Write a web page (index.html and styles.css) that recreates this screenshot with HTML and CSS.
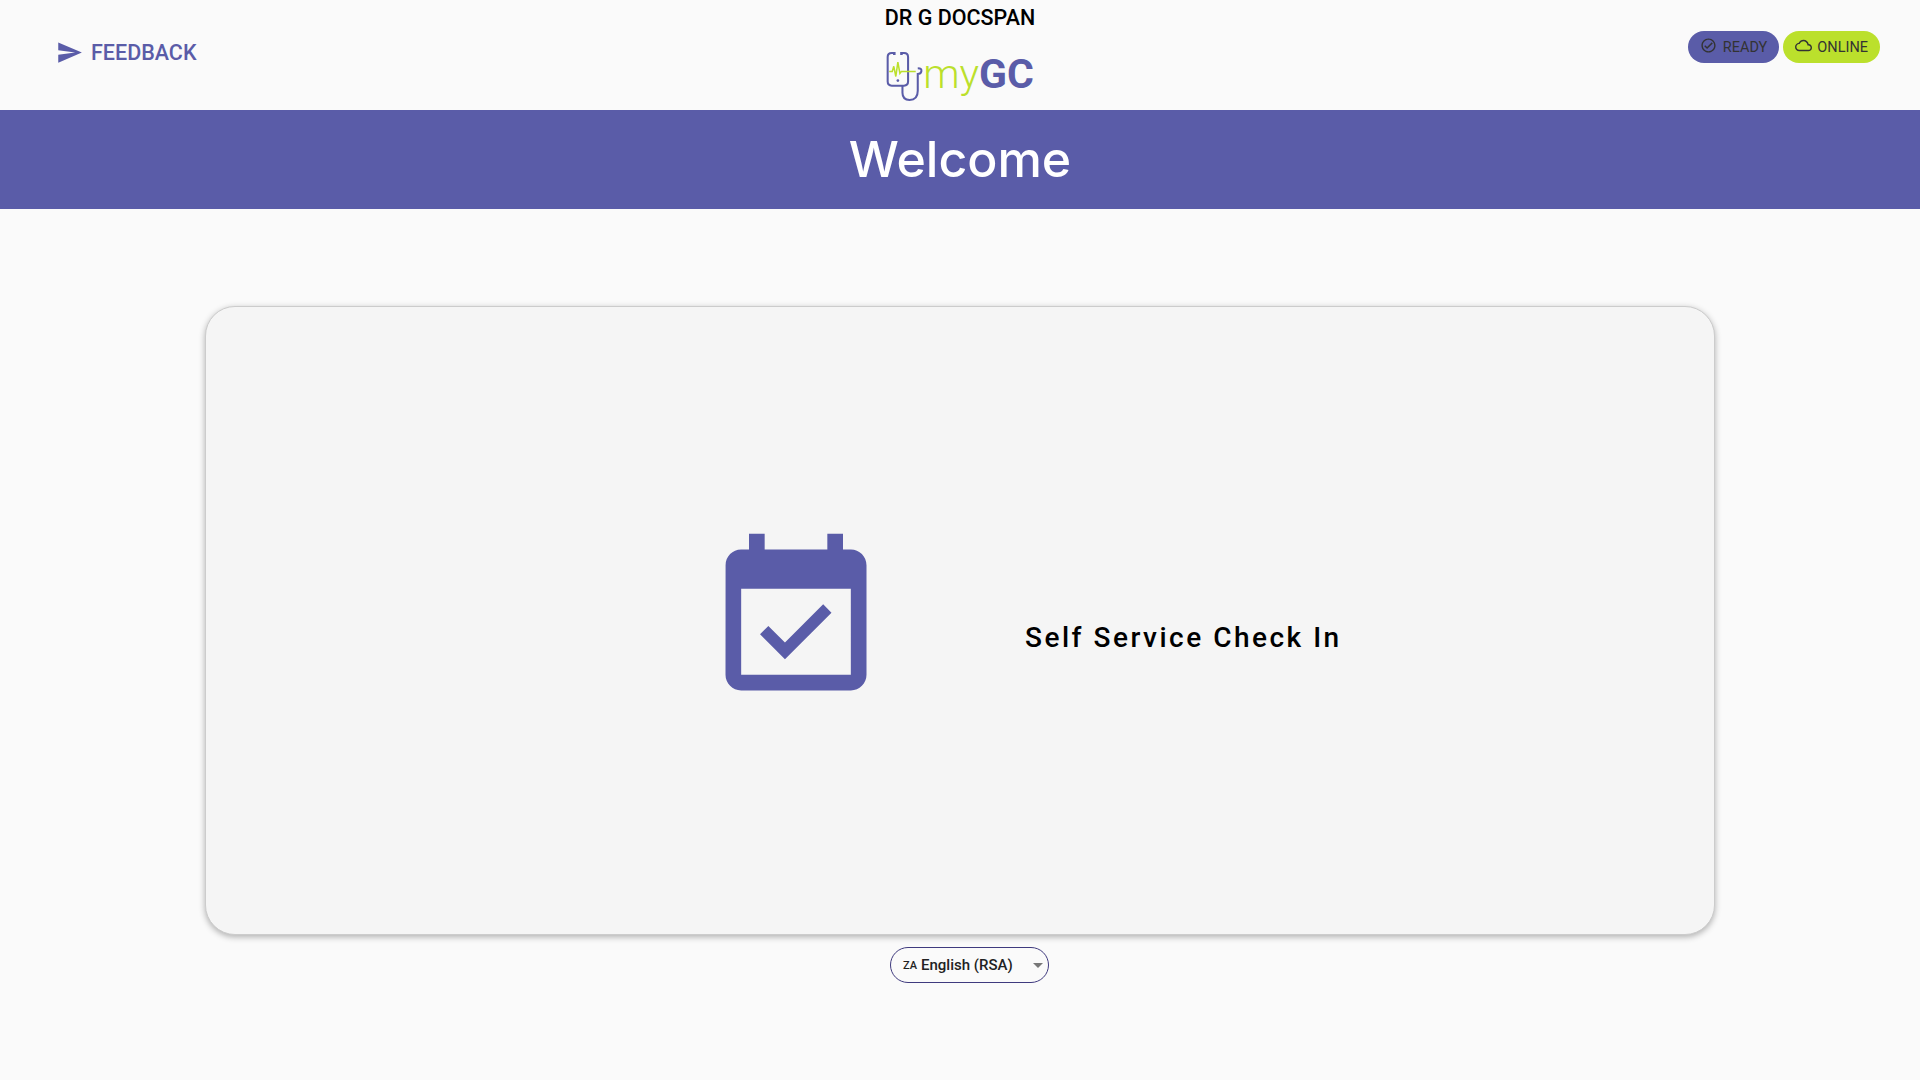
FILE: index.html
```html
<!DOCTYPE html>
<html lang="en">
<head>
    <meta charset="UTF-8">
    <meta name="viewport" content="width=device-width, initial-scale=1.0">
    <title>myGC</title>
    <link rel="stylesheet" href="styles.css">
</head>
<body>
    <header class="top-bar">
        <a class="feedback" href="#feedback">
            <svg class="feedback-icon" viewBox="0 0 24 24"><path d="M2.01 21L23 12 2.01 3 2 10l15 2-15 2z"/></svg>
            <span>FEEDBACK</span>
        </a>
        <div class="brand">
            <div class="doctor-name">DR G DOCSPAN</div>
            <div class="logo">
                <svg class="logo-mark" viewBox="0 0 36 50" fill="none">
                    <path d="M8 2H5.500C3 2 1.500 3.500 1.500 6v24c0 2.500 1.500 4 4 4h12c2.500 0 4-1.500 4-4V6c0-2.500-1.500-4-4-4H15" stroke="#5a5ca8" stroke-width="2"/>
                    <path d="M8 1v3M15 1v3" stroke="#5a5ca8" stroke-width="2.500"/>
                    <circle cx="11.500" cy="29" r="1.300" fill="#5a5ca8"/>
                    <path d="M3 20h3l1.500-5 2 10 2-14 2 11 1.500-2h14" stroke="#bbe02c" stroke-width="1.500"/>
                    <path d="M31 17c3 0 4 1 3.500 3-.5 2-2.500 2.500-3.500 2.500V39c0 6-3 9-8 9s-7-3-7-7v-7" stroke="#5a5ca8" stroke-width="2"/>
                </svg>
                <span class="logo-my">my</span><span class="logo-gc">GC</span>
            </div>
        </div>
        <div class="status">
            <span class="pill pill-ready">
                <svg class="pill-icon" viewBox="0 0 24 24"><path d="M12 2C6.480 2 2 6.480 2 12s4.480 10 10 10 10-4.480 10-10S17.520 2 12 2zm0 18c-4.410 0-8-3.590-8-8s3.590-8 8-8 8 3.590 8 8-3.590 8-8 8zm4.590-12.420L10 14.170l-2.590-2.580L6 13l4 4 8-8z"/></svg>
                READY
            </span>
            <span class="pill pill-online">
                <svg class="pill-icon" viewBox="0 0 24 24"><path d="M12 6c2.620 0 4.880 1.860 5.390 4.430l.3 1.500 1.530.11c1.560.1 2.780 1.410 2.780 2.960 0 1.650-1.350 3-3 3H6c-2.210 0-4-1.790-4-4 0-2.050 1.530-3.760 3.560-3.970l1.070-.11.5-.95C8.080 7.140 9.940 6 12 6m0-2C9.110 4 6.600 5.640 5.350 8.040 2.340 8.360 0 10.910 0 14c0 3.310 2.690 6 6 6h13c2.760 0 5-2.240 5-5 0-2.640-2.050-4.780-4.650-4.960C18.670 6.590 15.640 4 12 4z"/></svg>
                ONLINE
            </span>
        </div>
    </header>

    <div class="banner">
        <h1>Welcome</h1>
    </div>

    <main class="card">
        <svg class="card-icon" viewBox="0 0 24 24"><path d="M16.530 11.060L15.470 10l-4.880 4.880-2.120-2.120-1.060 1.060L10.590 17l5.940-5.940zM19 3h-1V1h-2v2H8V1H6v2H5c-1.110 0-1.990.9-1.990 2L3 19c0 1.100.89 2 2 2h14c1.100 0 2-.9 2-2V5c0-1.100-.9-2-2-2zm0 16H5V8h14v11z"/></svg>
        <span class="card-label">Self Service Check In</span>
    </main>

    <div class="language-row">
        <div class="language-select">
            <span class="flag">ZA</span>
            <span>English (RSA)</span>
            <span class="caret"></span>
        </div>
    </div>
</body>
</html>
```

FILE: styles.css
```css
body {
	margin: 0;
	background-color: #fafafa;
	font-family: Roboto, "Liberation Sans", sans-serif;
	color: #000;
}

.top-bar {
	display: grid;
	grid-template-columns: 1fr auto 1fr;
	height: 110px;
}

.feedback {
	display: flex;
	align-items: center;
	align-self: start;
	gap: 8px;
	margin: 39px 0 0 56px;
	color: #5a5ca8;
	font-size: 21.500px;
	font-weight: 500;
	text-decoration: none;
}

.feedback-icon {
	width: 27px;
	height: 27px;
	fill: #5a5ca8;
}

.brand {
	display: flex;
	flex-direction: column;
	align-items: center;
}

.doctor-name {
	margin-top: 6px;
	font-size: 21.500px;
	font-weight: 500;
	line-height: 24px;
}

.logo {
	display: flex;
	align-items: flex-start;
	margin-top: 22px;
	height: 52px;
	font-size: 41px;
	line-height: 44px;
}

.logo-mark {
	width: 37px;
	height: 51px;
	margin-top: -1px;
}

.logo-my {
	color: #bbe02c;
	font-weight: 300;
}

.logo-gc {
	color: #5a5ca8;
	font-weight: 700;
}

.status {
	display: flex;
	justify-content: flex-end;
	align-items: flex-start;
	gap: 4px;
	padding: 31px 40px 0 0;
}

.pill {
	display: flex;
	align-items: center;
	gap: 6px;
	height: 32px;
	padding: 0 12px;
	border-radius: 16px;
	color: #333;
	font-size: 14.500px;
}

.pill-icon {
	width: 17px;
	height: 17px;
	margin-top: -3px;
	fill: #333;
}

.pill-ready {
	background: #5a5ca8;
}

.pill-online {
	background: #bbe02c;
	gap: 5px;
}

.banner {
	background: #5a5ca8;
	height: 99px;
	display: flex;
	align-items: center;
	justify-content: center;
}

.banner h1 {
	margin: -2px 0 0;
	color: #fff;
	font-family: Inter, sans-serif;
	font-size: 50px;
	font-weight: 500;
}

.card {
	display: flex;
	align-items: flex-start;
	width: 1508px;
	height: 627px;
	margin: 97px auto 0;
	background: #f5f5f5;
	border: 1px solid #ccc;
	border-radius: 30px;
	box-shadow: 0 2px 6px rgba(0,0,0,0.3);
}

.card-icon {
	width: 188px;
	height: 188px;
	margin: 219px 0 0 496px;
	fill: #5a5ca8;
}

.card-label {
	margin: 313px 0 0 135px;
	font-size: 28px;
	font-weight: 500;
	letter-spacing: 2.500px;
	line-height: 36px;
}

.language-row {
	display: flex;
	justify-content: center;
	padding: 12px 0 0 19px;
}

.language-select {
	display: flex;
	align-items: center;
	box-sizing: border-box;
	width: 159px;
	height: 36px;
	padding: 0 12px;
	border: 1px solid #3f3a7e;
	border-radius: 18px;
	font-size: 15px;
	font-weight: 500;
	color: #222;
}

.flag {
	margin-right: 4px;
	font-size: 11px;
}

.caret {
	margin: 1px -7px 0 auto;
	border-top: 5px solid #777;
	border-left: 5px solid transparent;
	border-right: 5px solid transparent;
}
```
